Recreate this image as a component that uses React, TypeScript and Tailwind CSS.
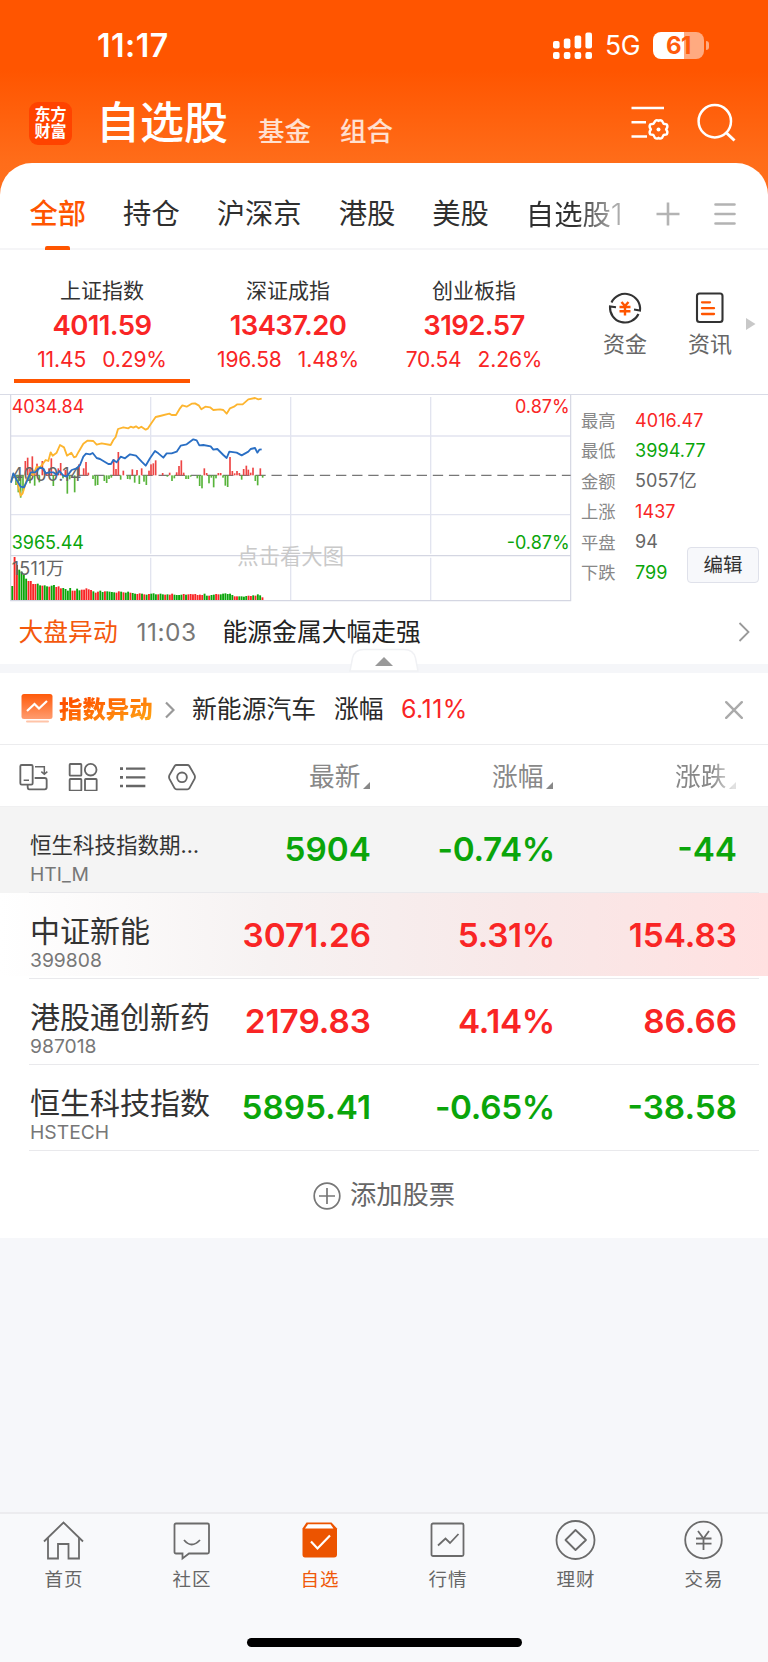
import type { ReactNode } from "react";
import clsx from "clsx";

// Watchlist screen: header, index strip with intraday chart, quote table, tab bar

const GROUPS = ["持仓", "沪深京", "港股", "美股"];

const INDICES = [
  { name: "上证指数", value: "4011.59", change: "11.45", pct: "0.29%" },
  { name: "深证成指", value: "13437.20", change: "196.58", pct: "1.48%" },
  { name: "创业板指", value: "3192.57", change: "70.54", pct: "2.26%" },
];

const STATS = [
  { label: "最高", value: "4016.47", color: "text-[#f92525]" },
  { label: "最低", value: "3994.77", color: "text-[#0aa50a]" },
  { label: "金额", value: "5057亿", color: "text-[#666]" },
  { label: "上涨", value: "1437", color: "text-[#f92525]" },
  { label: "平盘", value: "94", color: "text-[#666]" },
  { label: "下跌", value: "799", color: "text-[#0aa50a]" },
];

const QUOTES = [
  { name: "恒生科技指数期…", code: "HTI_M", last: "5904", pct: "-0.74%", diff: "-44", up: false, pinned: true },
  { name: "中证新能", code: "399808", last: "3071.26", pct: "5.31%", diff: "154.83", up: true, flash: true },
  { name: "港股通创新药", code: "987018", last: "2179.83", pct: "4.14%", diff: "86.66", up: true },
  { name: "恒生科技指数", code: "HSTECH", last: "5895.41", pct: "-0.65%", diff: "-38.58", up: false },
];

// Chart geometry, in units of a third of a pixel
const AVG_LINE =
  "33,290 40,268 50,285 62,332 68,325 80,285 90,262 100,270 110,245 120,248 137,225 145,228 152,202 158,212 170,203 180,180 192,187 201,212 214,203 222,217 228,215 236,200 250,176 262,167 280,168 290,179 305,175 332,180 340,165 347,156 354,132 370,127 385,130 392,125 400,128 408,124 416,130 424,125 437,134 443,131 455,113 467,96 480,93 508,86 515,90 528,90 540,70 547,61 560,65 575,56 585,55 597,62 604,73 616,65 630,67 640,75 660,73 670,75 680,86 690,70 702,65 712,58 728,58 745,43 765,39 775,43 785,41";
const PRICE_LINE =
  "33,293 40,265 50,285 62,305 72,307 80,290 92,262 105,262 120,247 130,252 137,265 147,262 160,262 170,270 178,258 190,272 200,275 215,255 230,250 240,240 250,215 258,206 270,208 278,204 290,219 300,222 325,237 333,237 340,225 350,232 362,215 375,220 390,208 408,212 425,230 437,242 450,220 465,198 475,205 490,218 500,205 515,205 530,200 542,182 560,178 580,163 590,166 598,181 610,180 632,184 640,194 652,192 670,210 680,219 688,200 710,203 725,211 745,200 752,192 765,189 772,203 778,194 785,193";

// [x, y] of each bar's far end, measured from the zero line at y=271
const MOMENTUM: [number, number][] = [
  [40, 280], [48, 300], [55, 322], [62, 338], [69, 320], [76, 228], [83, 218], [90, 295], [90, 250],
  [97, 214], [104, 302], [104, 255], [111, 236], [118, 292], [127, 228], [134, 258], [140, 262], [147, 250],
  [154, 220], [160, 303], [168, 262], [175, 250], [182, 234], [189, 280], [196, 255], [202, 326], [209, 283],
  [224, 322], [237, 238], [251, 250], [258, 231], [265, 263], [279, 282], [286, 302], [293, 300], [313, 288],
  [320, 294], [327, 282], [334, 278], [341, 222], [348, 252], [355, 201], [362, 284], [370, 257], [383, 282],
  [390, 283], [397, 253], [404, 293], [411, 255], [418, 297], [425, 250], [432, 290], [439, 300], [447, 257],
  [453, 238], [460, 235], [467, 226], [488, 264], [502, 275], [509, 263], [516, 288], [523, 280], [530, 262],
  [537, 243], [544, 226], [551, 263], [558, 282], [565, 282], [572, 275], [592, 280], [599, 303], [606, 310],
  [613, 250], [620, 264], [627, 295], [634, 278], [641, 307], [648, 280], [655, 264], [662, 264], [669, 278],
  [676, 302], [683, 306], [690, 216], [697, 258], [704, 265], [711, 258], [718, 264], [725, 284], [731, 252],
  [739, 242], [745, 254], [752, 263], [759, 248], [766, 288], [773, 301], [781, 250], [788, 278],
];

const VOLUME = [
  42, 129, 105, 91, 85, 75, 64, 57, 57, 48, 48, 49, 44, 43, 44, 41, 40, 43, 45, 39, 41, 35, 36, 33, 28, 36, 28, 28,
  34, 29, 31, 31, 35, 32, 30, 26, 22, 25, 28, 24, 26, 26, 25, 24, 23, 22, 26, 25, 23, 22, 25, 22, 21, 19, 18, 20, 19,
  17, 16, 18, 19, 20, 17, 17, 19, 17, 16, 17, 16, 19, 16, 15, 15, 16, 18, 16, 17, 18, 17, 18, 15, 16, 15, 19, 13, 13,
  15, 16, 18, 17, 17, 19, 20, 18, 19, 15, 11, 11, 11, 11, 10, 12, 13, 12, 14, 13, 17, 14, 8,
];
// r = rising minute, g = falling minute
const VOLUME_SIDE =
  "grrggggrrrrggrggrggrrrggggrrggrrrrrgrrggrggggrrgrggrggrrgrgrgggrggrgrrggggrgrrrrrrrggrggrrggggggrrggggrrgrggr";

const FADE = "[mask-image:linear-gradient(to_right,#000_50%,rgba(0,0,0,.4)_90%)]";

function Header() {
  return (
    <header className="h-[163px] shrink-0 text-white">
      <div className="flex h-[91px] items-center pl-[97px]">
        <span className="w-[456px] text-[32px] leading-none font-semibold tracking-[0.5px]">11:17</span>
        <svg className="h-[27px] w-[40px]" viewBox="0 0 40 27" fill="currentColor">
          {[9, 6.5, 3.5, 0.5].map((y, i) => (
            <g key={y}>
              <rect x={i * 10.8} y={y} width="6.6" height={16.5 - y} rx="2" />
              <rect x={i * 10.8} y="20" width="6.6" height="7" rx="2" />
            </g>
          ))}
        </svg>
        <span className="ml-[12px] w-[48px] text-[26.5px] leading-none tracking-[-0.3px]">5G</span>
        <div className="flex h-[27px] w-[51px] items-center justify-center rounded-[8px] bg-[linear-gradient(to_right,#fff_61%,#ffaa80_61%)] text-[24px] leading-none font-bold tracking-[-0.5px] text-[#ff5b0c]">
          61
        </div>
        <span className="ml-[2px] h-[9px] w-[3px] rounded-r-full bg-[#ffaa80]" />
      </div>
      <div className="flex h-[64px] items-center pl-[29px]">
        <div className="flex h-[43px] w-[43px] flex-col items-center justify-center rounded-[9px] bg-[#ff4300] text-[16px] leading-[17.5px] font-bold">
          <span>东方</span>
          <span>财富</span>
        </div>
        <h1 className="ml-[24px] text-[44px] leading-none font-medium">自选股</h1>
        <span className="mt-[16px] ml-[30px] text-[26.5px] leading-none font-medium text-white/80">基金</span>
        <span className="mt-[16px] ml-[29px] text-[26.5px] leading-none font-medium text-white/80">组合</span>
        <svg className="ml-[237px] h-[38px] w-[40px]" viewBox="630 104 40 38" fill="none" stroke="currentColor" strokeWidth="2.4">
          <path d="M631.5 108H664M631.5 122.3H646M631.5 136.5H647" />
          <path
            strokeLinejoin="round"
            d="M655.2 121q1.6-1.6 3.3 0q1.7-1.600 3.600 0l1.500 2.800l3.200.6q1.500 2.400-.7 5q2.200 2.600.7 5l-3.200.6l-1.500 2.800q-1.900 1.600-3.600 0q-1.700 1.600-3.600 0l-1.500-2.800l-3.200-.6q-1.500-2.400.7-5q-2.200-2.600-.7-5l3.200-.6z"
          />
          <circle cx="658.5" cy="129.5" r="2" fill="currentColor" stroke="none" />
        </svg>
        <svg className="ml-[27px] h-[40px] w-[40px]" viewBox="699 102 40 40" fill="none" stroke="currentColor" strokeWidth="2.5">
          <circle cx="716.8" cy="120.2" r="16.2" />
          <path d="M728 131.5L736.5 139.5" strokeWidth="3" />
        </svg>
      </div>
    </header>
  );
}

function GroupTabs() {
  return (
    <nav className="flex h-[87px] items-center border-b-2 border-[#f5f5f7] pt-[17px] pl-[29.5px] text-[28.3px] leading-none text-[#2f2f2f]">
      <div className="relative mr-[37px] flex h-full items-center font-medium text-[#ff5500]">
        全部
        <span className="absolute -bottom-[2px] left-[15.5px] h-[4px] w-[25px] rounded-t-[2px] bg-[#ff5500]" />
      </div>
      {GROUPS.map((g) => (
        <span key={g} className="mr-[37px]">
          {g}
        </span>
      ))}
      <span className={clsx("w-[98px]", FADE)}>
        自选股<span className="text-[30px] font-light">1</span>
      </span>
      <svg className="ml-[32px] h-[24px] w-[24px]" viewBox="0 0 24 24" stroke="#b3b3b3" strokeWidth="2.6">
        <path d="M12 .5V23.500M.5 12H23.500" />
      </svg>
      <svg className="ml-[34px] h-[24px] w-[22px]" viewBox="0 0 22 24" stroke="#b3b3b3" strokeWidth="2.6" strokeLinecap="round">
        <path d="M1.500 2.500H20.500M1.500 12H20.500M1.500 21.500H20.500" />
      </svg>
    </nav>
  );
}

function IndexStrip() {
  return (
    <section className="flex h-[144px] pl-[14px]">
      {INDICES.map((idx, i) => (
        <div key={idx.name} className="relative mr-[10px] flex w-[176px] flex-col items-center pt-[26px] text-[#f92525]">
          <span className="text-[21px] leading-[30px] text-[#333]">{idx.name}</span>
          <span className="mt-[2px] text-[27.5px] leading-[34px] font-semibold tracking-[-0.6px]">{idx.value}</span>
          <span className="mt-[4px] flex gap-[16px] text-[21px] leading-[28px] tracking-[-0.1px]">
            <span>{idx.change}</span>
            <span>{idx.pct}</span>
          </span>
          {i === 0 && <span className="absolute bottom-[11px] h-[4px] w-full bg-[#ff5500]" />}
        </div>
      ))}
      <div className="ml-[31px] flex w-[44px] flex-col items-center pt-[41px]">
        <svg className="h-[34px] w-[34px]" viewBox="0 0 34 34" fill="none" stroke="#333" strokeWidth="2.1">
          <path d="M3.500 11.500A15 15 0 0 1 32 19.500L26 18.500M30.500 23A15 15 0 0 1 2 15.500L8 16.300" />
          <path d="M13.500 11L17 15L20.500 11M11.500 16H22.500M11.500 20.200H22.500M17 15V24.500" stroke="#ff5500" strokeWidth="2.4" />
        </svg>
        <span className="mt-[7px] text-[22px] leading-[24px] whitespace-nowrap text-[#666]">资金</span>
      </div>
      <div className="ml-[41px] flex w-[44px] flex-col items-center pt-[41px]">
        <svg className="h-[34px] w-[34px]" viewBox="0 0 34 34" fill="none" stroke="#333" strokeWidth="2.1">
          <rect x="4" y="2.500" width="25.500" height="28.500" rx="2.500" />
          <path d="M9 11.300H17M9 17.200H21M9 23H21" stroke="#ff5500" strokeWidth="2.3" strokeLinecap="round" />
        </svg>
        <span className="mt-[7px] text-[22px] leading-[24px] whitespace-nowrap text-[#666]">资讯</span>
      </div>
      <svg className="mt-[68px] ml-[14px] h-[12px] w-[10px]" viewBox="0 0 10 12" fill="#c8c8c8">
        <path d="M0 0L9.500 6L0 12Z" />
      </svg>
    </section>
  );
}

function IntradayChart() {
  return (
    <svg className="h-[208px] w-[562px] shrink-0" viewBox="30 27 1686 624" fontSize="54">
      <g stroke="#e2e4ef" strokeWidth="4">
        <path d="M32 153H1712M32 389H1712" />
        <path d="M452 36V506M452 518V645M872 36V506M872 518V645M1292 36V506M1292 518V645" />
      </g>
      <path d="M32 512H1712M32 29V647H1712V29" fill="none" stroke="#d4d6e2" strokeWidth="3.500" />
      <path d="M40 271H1712" stroke="#777" strokeWidth="3.500" strokeDasharray="31 17.400" />
      {VOLUME.map((v, i) => (
        <rect
          key={i}
          x={34 + i * 6.95}
          y={645 - v}
          width="5.6"
          height={v}
          fill={VOLUME_SIDE[i] === "r" ? "#f92525" : "#0aa50a"}
        />
      ))}
      {MOMENTUM.map(([x, y], i) => (
        <rect
          key={i}
          x={x - 2.5}
          y={Math.min(y, 271)}
          width="5"
          height={Math.abs(y - 271)}
          fill={y < 271 ? "#ee4444" : "#57b43a"}
        />
      ))}
      <g fill="#666">
        <text x="35" y="289" letterSpacing="1">4000.14</text>
        <text x="35" y="569" letterSpacing="1">1511万</text>
      </g>
      <polyline points={AVG_LINE} fill="none" stroke="#fdb52f" strokeWidth="5.500" strokeLinejoin="round" />
      <polyline points={PRICE_LINE} fill="none" stroke="#2a6fc4" strokeWidth="5.500" strokeLinejoin="round" />
      <text x="35" y="84" fill="#f92525">4034.84</text>
      <text x="35" y="492" fill="#0aa50a">3965.44</text>
      <text x="1709" y="84" fill="#f92525" textAnchor="end">0.87%</text>
      <text x="1709" y="492" fill="#0aa50a" textAnchor="end">-0.87%</text>
      <text x="712" y="536" fill="#c9c9c9" fontSize="64">点击看大图</text>
    </svg>
  );
}

function ChartPanel() {
  return (
    <section className="flex h-[208px] border-t border-[#d9dbe6] pl-[10px]">
      <div className="-mt-px">
        <IntradayChart />
      </div>
      <div className="relative flex-1 pt-[10.500px] pl-[9px]">
        {STATS.map((s) => (
          <div key={s.label} className="flex h-[30.400px] items-center leading-none">
            <span className="w-[54px] text-[17.3px] text-[#888]">{s.label}</span>
            <span className={clsx("text-[18px] tracking-[0.1px]", s.color)}>{s.value}</span>
          </div>
        ))}
        <button className="absolute top-[152px] left-[115px] h-[36px] w-[72px] rounded-[4px] border border-[#dfe1ea] bg-[#f7f8fb] pt-[2px] text-[19.500px] leading-none text-[#333]">
          编辑
        </button>
      </div>
    </section>
  );
}

function NewsRow() {
  return (
    <section className="relative flex h-[71px] shrink-0 items-start border-b-[9px] border-[#f5f6f9] pl-[18.500px] text-[24.800px] leading-[61px]">
      <span className="w-[118px] text-[#f4580c]">大盘异动</span>
      <span className="w-[86px] text-[24.500px] tracking-[0.5px] text-[#777]">11:03</span>
      <span className="text-[#222]">能源金属大幅走强</span>
      <svg className="absolute top-[20px] right-[18px] h-[20px] w-[12px]" viewBox="0 0 12 20" fill="none" stroke="#999" strokeWidth="1.800">
        <path d="M1.500 1L10.500 10L1.500 19" />
      </svg>
      {/* Collapse handle straddling the divider */}
      <svg className="absolute top-[46px] left-[349px] h-[25px] w-[70px]" viewBox="0 0 70 25">
        <path d="M1 23L3.500 10Q5.500 1.500 15 1.500H55Q64.500 1.500 66.500 10L69 23Z" fill="#fff" stroke="#f0f1f4" strokeWidth="1.500" />
        <path d="M35 9L44 18H26Z" fill="#999" />
      </svg>
    </section>
  );
}

function AlertRow() {
  return (
    <section className="flex h-[72px] shrink-0 items-center border-b border-[#ececee] pt-[2px] pl-[21px] text-[24.800px] leading-none text-[#2a2a2a]">
      <svg className="-mt-[2px] h-[31px] w-[32px]" viewBox="0 0 32 31" fill="none">
        <defs>
          <linearGradient id="alert" x1="0" y1="0" x2="0" y2="1">
            <stop stopColor="#ff5a0a" />
            <stop offset="1" stopColor="#ff9c70" />
          </linearGradient>
        </defs>
        <rect x=".5" y="1" width="31" height="25" rx="2.500" fill="url(#alert)" />
        <path d="M6 18L13.500 11L18 15.500L26 8" stroke="#fff" strokeWidth="2.200" />
        <path d="M6 28.500H27" stroke="#ffc4a8" strokeWidth="2" strokeLinecap="round" />
      </svg>
      <span className="ml-[6px] bg-[linear-gradient(160deg,#ff5200_20%,#ffa012_85%)] bg-clip-text text-[23.400px] leading-[32px] font-black text-transparent">
        指数异动
      </span>
      <svg className="ml-[12px] h-[18px] w-[10px]" viewBox="0 0 10 18" fill="none" stroke="#999" strokeWidth="2.200">
        <path d="M1 1.500L8.500 9L1 16.500" />
      </svg>
      <span className="ml-[17.500px] w-[142px]">新能源汽车</span>
      <span className="w-[67px]">涨幅</span>
      <span className="w-[324px] text-[25px] tracking-[0.4px] text-[#f92525]">6.11%</span>
      <svg className="h-[18px] w-[18px]" viewBox="0 0 18 18" stroke="#aaa" strokeWidth="2.400" strokeLinecap="round">
        <path d="M1.200 1.200L16.800 16.800M16.800 1.200L1.200 16.800" />
      </svg>
    </section>
  );
}

function HeadCell({ children, className }: { children: ReactNode; className?: string }) {
  return (
    <span className={clsx("flex items-center pt-[2px] text-[25.700px] leading-none text-[#888]", className)}>
      {children}
      <svg className="mt-[18px] ml-[2.500px] h-[7px] w-[7px]" viewBox="0 0 7 7" fill="#888">
        <path d="M7 0V7H0Z" />
      </svg>
    </span>
  );
}

function TableHead() {
  return (
    <div className="flex h-[62px] shrink-0 items-center border-b border-[#f0f0f1] pl-[19px]">
      <svg className="h-[30px] w-[180px]" viewBox="57 465 540 90" fill="none" stroke="#666" strokeWidth="5.500">
        <rect x="61" y="477" width="37" height="59" rx="4" />
        <path d="M71 523H87M105 482H133V502M124 497L133 505L142 497" strokeWidth="4.500" />
        <path d="M104 516H134Q140 516 140 522V544Q140 550 134 550H88Q83 550 83 542V537" />
        <rect x="209" y="474" width="35" height="35" rx="2" />
        <circle cx="272" cy="491" r="17.500" />
        <rect x="209" y="519" width="35" height="35" rx="2" />
        <rect x="255" y="519" width="35" height="35" rx="2" />
        <path d="M378 488H436M378 514H436M378 540H436" strokeWidth="7" />
        <path d="M360 488H369M360 514H369M360 540H369" strokeWidth="8" />
        <path d="M530 477H562Q566 477 568 480L584 508Q586 513 584 518L568 547Q566 550 562 550H530Q526 550 524 547L508 518Q506 513 508 508L524 480Q526 477 530 477Z" />
        <circle cx="546" cy="514" r="14.500" />
      </svg>
      <HeadCell className="ml-[110px] w-[183px]">最新</HeadCell>
      <HeadCell className="w-[183px]">涨幅</HeadCell>
      <HeadCell className="[mask-image:linear-gradient(to_right,#000_60%,rgba(0,0,0,.25)_95%)]">涨跌</HeadCell>
    </div>
  );
}

function QuoteRow({ quote }: { quote: (typeof QUOTES)[number] }) {
  return (
    <div
      className={clsx(
        "relative flex h-[86px] shrink-0 items-center text-[33.300px] leading-none font-semibold",
        quote.up ? "text-[#f92525]" : "text-[#0aa50a]",
        quote.pinned && "bg-[#f4f4f4]",
        quote.flash && "bg-[linear-gradient(to_right,#fff,#f6f2f2_35%,#f8e8e8_68%,#ffe1e1)] bg-[length:100%_83px] bg-[0_2px] bg-no-repeat",
      )}
    >
      <div className="flex w-[210px] flex-col pt-[13px] pl-[30px] font-normal whitespace-nowrap">
        <span className={clsx("leading-[34px] text-[#333]", quote.pinned ? "text-[21.500px]" : "text-[30px]")}>
          {quote.name}
        </span>
        <span className="text-[19.300px] leading-[24px] text-[#777]">{quote.code}</span>
      </div>
      <span className="w-[161px] text-right">{quote.last}</span>
      <span className="w-[184px] text-right tracking-[-0.3px]">{quote.pct}</span>
      <span className="w-[182px] text-right">{quote.diff}</span>
      <span className="absolute right-[9px] bottom-0 left-[29px] h-px bg-[#e9e9ec]" />
    </div>
  );
}

const TABS: { label: string; icon: ReactNode }[] = [
  {
    label: "首页",
    icon: (
      <>
        <path d="M1 20.500L20.500 1.500L40 20.500" />
        <path d="M5 17V37.500H15V23H25.500V37.500H36V17" />
      </>
    ),
  },
  {
    label: "社区",
    icon: (
      <>
        <path d="M5 2.500H36.500Q38 2.500 38 4V31Q38 32.500 36.500 32.500H18L11.500 37.500V32.500H5Q3.500 32.500 3.500 31V4Q3.500 2.500 5 2.500Z" />
        <path d="M13 19Q20.500 28 29 19" />
      </>
    ),
  },
  {
    label: "自选",
    icon: (
      <>
        <path d="M7.500 1.500H32.500L38 7.500V33.500Q38 36.500 35 36.500H6Q3.500 36.500 3.500 33.500V7.500Z" fill="#ec5400" stroke="none" />
        <path d="M9 3.200H31.500L34.500 7.500H6Z" fill="#fff" stroke="none" />
        <path d="M12 20.500L18.500 27.500L31 14.500" stroke="#fff" strokeWidth="2.200" />
      </>
    ),
  },
  {
    label: "行情",
    icon: (
      <>
        <rect x="4.500" y="2.500" width="32" height="32.500" rx="1.500" />
        <path d="M11 24.500L18.500 17.500L23 22L31.500 13" />
      </>
    ),
  },
  {
    label: "理财",
    icon: (
      <>
        <circle cx="20.500" cy="19" r="19" />
        <path d="M20.500 9L31 19L20.500 29L10.500 19Z" strokeLinejoin="round" />
      </>
    ),
  },
  {
    label: "交易",
    icon: (
      <>
        <circle cx="20.500" cy="19" r="18.300" />
        <path d="M15 10L20.500 17.500L26 10M13 17.500H28.500M13 22.700H28.500M20.500 17.500V29" />
      </>
    ),
  },
];

function TabBar() {
  return (
    <footer className="h-[150px] shrink-0 border-t-2 border-[#ececef] bg-[#f8f9fb]">
      <div className="flex">
        {TABS.map((tab) => (
          <div
            key={tab.label}
            className={clsx(
              "flex w-[128px] flex-col items-center pt-[7px]",
              tab.label === "自选" ? "text-[#f0590a]" : "text-[#666]",
            )}
          >
            <svg className="h-[42px] w-[42px] overflow-visible" viewBox="0 0 42 42" fill="none" stroke="#6b6b6b" strokeWidth="1.800">
              {tab.icon}
            </svg>
            <span className="mt-[3px] text-[18.500px] leading-[26px] tracking-[1px]">{tab.label}</span>
          </div>
        ))}
      </div>
      <div className="mx-auto mt-[46px] h-[9px] w-[275px] rounded-full bg-black" />
    </footer>
  );
}

export default function App() {
  return (
    <div className="flex h-[1662px] w-[768px] flex-col overflow-hidden bg-[linear-gradient(to_bottom,#ff5500_0px,#ff5500_70px,#ff6d1a_163px,#ff701e_200px)] font-['Inter','Noto_Sans_CJK_SC',sans-serif]">
      <Header />
      <main className="flex flex-1 flex-col rounded-t-[32px] bg-white">
        <GroupTabs />
        <IndexStrip />
        <ChartPanel />
        <NewsRow />
        <AlertRow />
        <TableHead />
        {QUOTES.map((q) => (
          <QuoteRow key={q.code} quote={q} />
        ))}
        <div className="flex h-[87px] shrink-0 items-center justify-center gap-[9px] pt-[2px] text-[26.300px] leading-none text-[#666]">
          <svg className="h-[28px] w-[28px]" viewBox="0 0 28 28" fill="none" stroke="#777" strokeWidth="1.700">
            <circle cx="14" cy="14" r="12.800" />
            <path d="M14 6V22M6 14H22" />
          </svg>
          添加股票
        </div>
        <div className="flex-1 bg-[#f6f7fa]" />
      </main>
      <TabBar />
    </div>
  );
}
